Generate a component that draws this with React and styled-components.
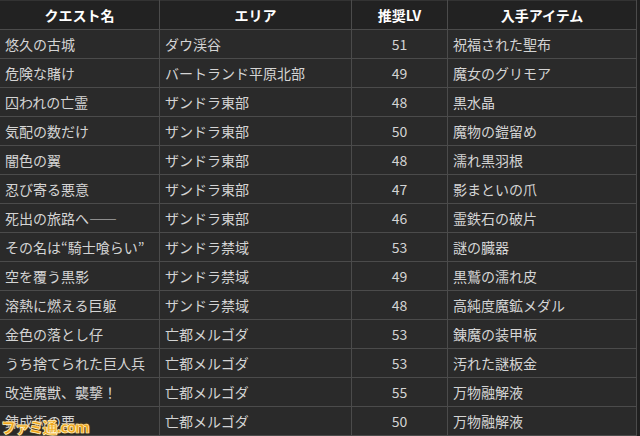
import React from 'react';
import styled, { createGlobalStyle } from 'styled-components';

const GlobalStyle = createGlobalStyle`
    html, body {
        margin: 0;
        padding: 0;
        background: #1c1c1c;
    }
    body {
        font-family: "Noto Sans CJK JP", "Noto Sans", sans-serif;
    }
`

const Frame = styled.div`
    position: relative;
    width: 640px;
    height: 436px;
    overflow: hidden;
    background: #202020;
`

const Table = styled.table`
    border-collapse: collapse;
    table-layout: fixed;
    width: 637px;
    margin-left: -1px;
    background: #2a2a2a;
`

const HeadCell = styled.th`
    height: 28px;
    padding: 0;
    border: 1px solid #4b4b4b;
    border-top-color: #333;
    background: #222;
    color: #fff;
    font-size: 14px;
    font-weight: 700;
    text-align: center;
    line-height: 28px;
`

const Cell = styled.td`
    height: 28px;
    padding: ${props => props.center ? '0' : '0 0 0 5px'};
    border: 1px solid #4b4b4b;
    color: #d4d4d4;
    font-size: 14px;
    line-height: 28px;
    white-space: nowrap;
    text-align: ${props => props.center ? 'center' : 'left'};
`

// watermark sits over the last row, like the source image
const Logo = styled.div`
    position: absolute;
    left: 1px;
    bottom: 0;
    font-family: "Noto Sans CJK JP", sans-serif;
    font-weight: 900;
    font-size: 15px;
    letter-spacing: -1.2px;
    color: #f0a51c;
    -webkit-text-stroke: 0.7px #fff3c8;
    text-shadow: 0 0 2px #c27a00, 0 0 1px #7a4a00;
    line-height: 19px;
`

const rows = [
    ['悠久の古城', 'ダウ渓谷', '51', '祝福された聖布'],
    ['危険な賭け', 'バートランド平原北部', '49', '魔女のグリモア'],
    ['囚われの亡霊', 'ザンドラ東部', '48', '黒水晶'],
    ['気配の数だけ', 'ザンドラ東部', '50', '魔物の鎧留め'],
    ['闇色の翼', 'ザンドラ東部', '48', '濡れ黒羽根'],
    ['忍び寄る悪意', 'ザンドラ東部', '47', '影まといの爪'],
    ['死出の旅路へ――', 'ザンドラ東部', '46', '霊鉄石の破片'],
    ['その名は“騎士喰らい”', 'ザンドラ禁域', '53', '謎の臓器'],
    ['空を覆う黒影', 'ザンドラ禁域', '49', '黒鷲の濡れ皮'],
    ['溶熱に燃える巨躯', 'ザンドラ禁域', '48', '高純度魔鉱メダル'],
    ['金色の落とし仔', '亡都メルゴダ', '53', '錬魔の装甲板'],
    ['うち捨てられた巨人兵', '亡都メルゴダ', '53', '汚れた謎板金'],
    ['改造魔獣、襲撃！', '亡都メルゴダ', '55', '万物融解液'],
    ['錬成術の要', '亡都メルゴダ', '50', '万物融解液'],
]

const App = () => {
    return (
        <Frame>
            <GlobalStyle />
            <Table>
                <colgroup>
                    <col style={{ width: 160 }} />
                    <col style={{ width: 192 }} />
                    <col style={{ width: 96 }} />
                    <col style={{ width: 189 }} />
                </colgroup>
                <thead>
                    <tr>
                        <HeadCell>クエスト名</HeadCell>
                        <HeadCell>エリア</HeadCell>
                        <HeadCell>推奨LV</HeadCell>
                        <HeadCell>入手アイテム</HeadCell>
                    </tr>
                </thead>
                <tbody>
                    {rows.map((r, i) => (
                        <tr key={i}>
                            <Cell>{r[0]}</Cell>
                            <Cell>{r[1]}</Cell>
                            <Cell center>{r[2]}</Cell>
                            <Cell>{r[3]}</Cell>
                        </tr>
                    ))}
                </tbody>
            </Table>
            <Logo>ファミ通.com</Logo>
        </Frame>
    )
}

export default App;
